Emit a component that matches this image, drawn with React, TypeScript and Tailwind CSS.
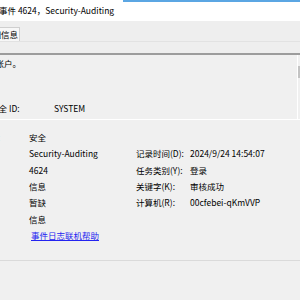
import React from "react";

const FONT = { fontFamily: '"Noto Sans CJK SC", "Noto Sans", sans-serif' };

const ROWS: [string, React.ReactNode, string, string][] = [
  ["日志名称(M):", "安全", "", ""],
  ["来源(S):", "Security-Auditing", "记录时间(D):", "2024/9/24 14:54:07"],
  ["事件 ID(E):", "4624", "任务类别(Y):", "登录"],
  ["级别(L):", "信息", "关键字(K):", "审核成功"],
  ["用户(U):", "暂缺", "计算机(R):", "00cfebei-qKmVVP"],
  ["操作代码(O):", "信息", "", ""],
  [
    "更多信息(I):",
    <span className="text-[#2424f0] underline ml-[2px]">事件日志联机帮助</span>,
    "",
    "",
  ],
];

export default function App() {
  return (
    <div
      className="w-[300px] h-[300px] overflow-hidden bg-[#f0f0f0] text-[8.5px] text-black"
      style={FONT}
    >
      {/* ── Title ─────────────────────────── */}
      <div className="relative h-[21px] bg-white flex items-center">
        <div className="absolute top-0 right-0 left-[123px] h-[2px] bg-[#5ba6e3]" />
        <span className="-ml-[1px] whitespace-nowrap">事件 4624，Security-Auditing</span>
      </div>

      {/* ── Tabs ──────────────────────────── */}
      <div className="h-[21px] bg-[#eeeeee] flex items-end border-b border-[#e2e2e2]">
        <div className="-ml-[18px] h-[14px] px-[1px] bg-[#f7f7f7] border border-b-0 border-[#cfcfcf] flex items-center whitespace-nowrap">
          详细信息
        </div>
      </div>
      <div className="h-[11px] bg-[#eeeeee]" />

      {/* ── Description box ───────────────── */}
      <div className="h-[67px] flex border-t-2 border-[#9c9c9c] border-b border-b-white">
        <div className="flex-1 pt-[1px] leading-[15px] border-r border-white overflow-hidden">
          <div className="-ml-[47px] whitespace-nowrap">
            <div>已成功登录帐户。</div>
            <div>&nbsp;</div>
            <div>主题:</div>
            <div className="flex pl-[37px]">
              <span className="w-[64px]">安全 ID:</span>
              <span>SYSTEM</span>
            </div>
          </div>
        </div>
        <div className="w-[2px] pt-[11px]">
          <div className="h-[12px] bg-[#c3c3c3]" />
        </div>
      </div>

      {/* ── Details grid ──────────────────── */}
      <div className="mt-[9px] -ml-[49px] grid grid-cols-[78px_107px_54px_1fr] whitespace-nowrap">
        {ROWS.map(([l1, v1, l2, v2], i) => (
          <React.Fragment key={i}>
            <div className="h-[16.33px] leading-[16.33px]">{l1}</div>
            <div className="h-[16.33px] leading-[16.33px]">{v1}</div>
            <div className="h-[16.33px] leading-[16.33px]">{l2}</div>
            <div className="h-[16.33px] leading-[16.33px]">{v2}</div>
          </React.Fragment>
        ))}
      </div>

      <div className="mt-[17px] border-t border-[#dadada]" />
    </div>
  );
}
